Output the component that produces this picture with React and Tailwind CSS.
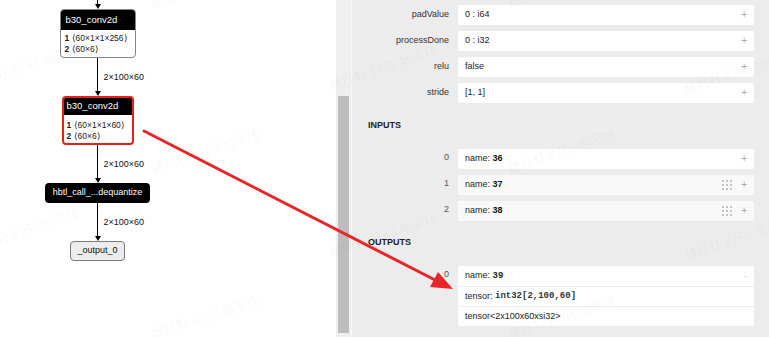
import React from "react";

const sans = { fontFamily: '"Liberation Sans", Arial, "Noto Sans CJK SC", sans-serif' };
const mono = { fontFamily: '"Liberation Mono", "DejaVu Sans Mono", monospace' };

function Edge({ label, h }) {
  return (
    <div className={`relative flex flex-col items-center ${h}`}>
      <div className="w-px flex-1 bg-black" />
      <div className="w-0 h-0 border-l-[3px] border-r-[3px] border-t-[5px] border-l-transparent border-r-transparent border-t-black" />
      {label && (
        <span className="absolute left-[9px] top-1/2 -translate-y-1/2 whitespace-nowrap text-[9px] leading-none text-[#111]">
          {label}
        </span>
      )}
    </div>
  );
}

function Plus({ faint }) {
  return <span className={`text-[10px] leading-none ${faint ? "text-[#dcdcdc]" : "text-[#a8a8a8]"}`}>{faint ? "-" : "+"}</span>;
}

function Dots() {
  return (
    <svg width="10" height="10" viewBox="0 0 10 10" className="mr-[9px]">
      {[0, 1, 2].map((r) =>
        [0, 1, 2].map((c) => (
          <rect key={`${r}-${c}`} x={c * 4} y={r * 4} width="2" height="2" fill="#c4c4c4" />
        ))
      )}
    </svg>
  );
}

function AttrRow({ label, value }) {
  return (
    <>
      <div className="h-[20px] flex items-center justify-end text-[9px] text-[#333]">{label}</div>
      <div className="h-[20px] flex items-center justify-between bg-white rounded-[2px] px-[7px] text-[9px] text-[#222]">
        <span>{value}</span>
        <Plus />
      </div>
    </>
  );
}

function InputRow({ idx, name, grid, white }) {
  return (
    <>
      <div className="h-[20px] flex items-center justify-end text-[9px] text-[#555] pb-[3px]">{idx}</div>
      <div className={`h-[20px] flex items-center justify-between rounded-[2px] px-[7px] text-[9px] text-[#222] ${white ? "bg-white" : "bg-[#f9f9f9]"}`}>
        <span>
          name: <b className="text-[#111]">{name}</b>
        </span>
        <span className="flex items-center">
          {grid && <Dots />}
          <Plus />
        </span>
      </div>
    </>
  );
}

const marks = [
  [25, 66], [25, 230],
  [205, -15], [205, 151], [205, 317],
  [383, 68], [383, 235],
  [562, -15], [562, 151], [562, 317],
  [738, 72], [738, 238],
];

export default function App() {
  return (
    <div className="relative w-[769px] h-[337px] overflow-hidden flex bg-white antialiased" style={sans}>
      {/* graph canvas */}
      <div className="relative w-[336px] h-full bg-white">
        <div className="flex flex-col items-center w-[195px]">
          <Edge h="h-[9px]" />
          {/* node 1 */}
          <div className="w-[76px] rounded-[4px] border border-[#858585] overflow-hidden bg-white">
            <div className="h-[20px] bg-black text-white text-[9.5px] flex items-center px-[5px]">b30_conv2d</div>
            <div className="pt-[3px] pb-[2px] px-[4px] text-[8.5px] text-[#222] leading-[11px] whitespace-nowrap">
              <div><b>1</b> ⟨60×1×1×256⟩</div>
              <div><b>2</b> ⟨60×6⟩</div>
            </div>
          </div>
          <Edge h="h-[38px]" label="2×100×60" />
          {/* node 2 */}
          <div className="w-[72px] rounded-[4px] border-2 border-[#e2231a] overflow-hidden bg-white">
            <div className="h-[17px] bg-black text-white text-[9.5px] flex items-center px-[3px]">b30_conv2d</div>
            <div className="pt-[5px] pb-[1px] px-[3px] text-[8.5px] text-[#222] leading-[11px] whitespace-nowrap">
              <div><b>1</b> ⟨60×1×1×60⟩</div>
              <div><b>2</b> ⟨60×6⟩</div>
            </div>
          </div>
          <Edge h="h-[38px]" label="2×100×60" />
          {/* node 3 */}
          <div className="w-[105px] h-[20px] rounded-[4px] bg-black text-white text-[9px] flex items-center justify-center whitespace-nowrap">
            hbtl_call_...dequantize
          </div>
          <Edge h="h-[38px]" label="2×100×60" />
          {/* node 4 */}
          <div className="w-[55px] h-[20px] rounded-[4px] bg-[#ececec] border border-[#7a7a7a] text-[9px] text-[#111] flex items-center justify-center">
            _output_0
          </div>
        </div>
      </div>

      {/* scrollbar */}
      <div className="w-[16px] h-full bg-[#efefef] border-r border-r-[#f7f7f7] flex flex-col pt-[96px] pb-[4px] px-[2px]">
        <div className="flex-1 bg-[#bdbdbd]" />
      </div>

      {/* properties panel */}
      <div className="flex-1 h-full bg-[#ececec] pt-[5px] pr-[15px] flex flex-col">
        <div className="grid grid-cols-[97px_1fr] gap-x-[9px] gap-y-[6px]">
          <AttrRow label="padValue" value="0 : i64" />
          <AttrRow label="processDone" value="0 : i32" />
          <AttrRow label="relu" value="false" />
          <AttrRow label="stride" value="[1, 1]" />
        </div>

        <div className="mt-[16px] h-[14px] pl-[16px] flex items-center text-[9px] font-bold text-[#222]">INPUTS</div>

        <div className="mt-[16px] grid grid-cols-[97px_1fr] gap-x-[9px] gap-y-[6px]">
          <InputRow idx="0" name="36" white />
          <InputRow idx="1" name="37" grid />
          <InputRow idx="2" name="38" grid />
        </div>

        <div className="mt-[15px] h-[14px] pl-[16px] flex items-center text-[9px] font-bold text-[#222]">OUTPUTS</div>

        <div className="mt-[16px] grid grid-cols-[97px_1fr] gap-x-[9px]">
          <div className="h-[20px] flex items-center justify-end text-[9px] text-[#555] pb-[2px]">0</div>
          <div className="bg-white rounded-[2px] text-[9px] text-[#222]">
            <div className="h-[20px] flex items-center justify-between px-[7px]">
              <span>
                name: <b className="text-[#222]" style={mono}>39</b>
              </span>
              <Plus faint />
            </div>
            <div className="h-[20px] flex items-center px-[7px] border-t border-[#ececec]">
              <span>tensor:&nbsp;</span>
              <span className="font-bold text-[#333]" style={mono}>int32[2,100,60]</span>
            </div>
            <div className="h-[20px] flex items-center px-[7px] border-t border-[#ececec]">
              tensor&lt;2x100x60xsi32&gt;
            </div>
          </div>
        </div>
      </div>

      {/* watermarks */}
      <div className="absolute inset-0 pointer-events-none">
        {marks.map(([cx, cy], i) => (
          <span
            key={i}
            className="absolute w-[120px] text-center text-[13px] leading-[14px] whitespace-nowrap text-black/[0.045] -rotate-[18deg]"
            style={{ left: cx - 60, top: cy - 7, fontFamily: '"Noto Sans CJK SC", sans-serif' }}
          >
            魏钰轩 8768 地平线
          </span>
        ))}
      </div>

      {/* red annotation arrow */}
      <svg className="absolute inset-0 pointer-events-none" width="769" height="337" viewBox="0 0 769 337">
        <line x1="144" y1="131" x2="437" y2="281" stroke="#e8262a" strokeWidth="3" strokeLinecap="round" />
        <polygon points="453,289 430,287 438,272" fill="#e8262a" />
      </svg>
    </div>
  );
}
